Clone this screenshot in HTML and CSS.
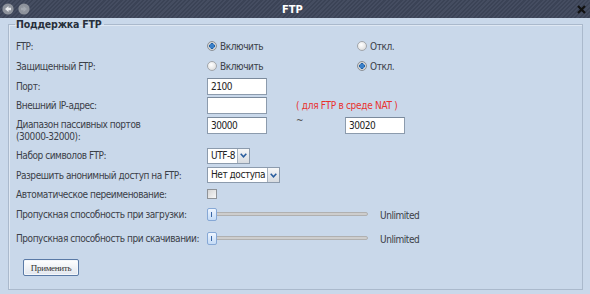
FILE: index.html
```html
<!DOCTYPE html>
<html lang="ru">
<head>
<meta charset="utf-8">
<title>FTP</title>
<link rel="stylesheet" href="styles.css">
</head>
<body>
<div class="window">
  <div class="titlebar">
    <div class="nav">
      <svg class="navbtn" width="12" height="12" viewBox="0 0 12 12"><circle cx="6" cy="6" r="5.6" fill="#8e939c"/><path d="M3 6 L6.5 3 L6.5 4.8 L9 4.8 L9 7.2 L6.5 7.2 L6.5 9 Z" fill="#e9ebee"/></svg>
      <svg class="navbtn" width="12" height="12" viewBox="0 0 12 12"><circle cx="6" cy="6" r="5.6" fill="#8e939c"/><path d="M9 6 L5.5 3 L5.5 4.8 L3 4.8 L3 7.2 L5.5 7.2 L5.5 9 Z" fill="#a3a8b0"/></svg>
    </div>
    <div class="title">FTP</div>
    <svg class="close" width="9" height="9" viewBox="0 0 9 9"><path d="M1 1 L8 8 M8 1 L1 8" stroke="#111" stroke-width="2.2"/></svg>
  </div>
  <div class="content">
    <fieldset class="group">
      <legend>Поддержка FTP</legend>
      <div class="row r20">
        <div class="label">FTP:</div>
        <div class="opt wide"><span class="radio on"></span>Включить</div>
        <div class="opt"><span class="radio"></span>Откл.</div>
      </div>
      <div class="row r20">
        <div class="label">Защищенный FTP:</div>
        <div class="opt wide"><span class="radio"></span>Включить</div>
        <div class="opt"><span class="radio on"></span>Откл.</div>
      </div>
      <div class="row r20">
        <div class="label">Порт:</div>
        <div class="cell"><span class="input">2100</span></div>
      </div>
      <div class="row r18">
        <div class="label">Внешний IP-адрес:</div>
        <div class="cell"><span class="input"></span></div>
        <div class="note">( для FTP в среде NAT )</div>
      </div>
      <div class="row rport">
        <div class="label two">Диапазон пассивных портов<br>(30000-32000):</div>
        <div class="cell"><span class="input">30000</span></div>
        <div class="tilde">~</div>
        <div class="cell"><span class="input">30020</span></div>
      </div>
      <div class="row r21">
        <div class="label">Набор символов FTP:</div>
        <div class="select"><span class="val">UTF-8</span><span class="arrow"><svg width="7" height="5" viewBox="0 0 7 5"><path d="M0.7 0.8 L3.5 3.8 L6.3 0.8" fill="none" stroke="#2a5d9e" stroke-width="1.6"/></svg></span></div>
      </div>
      <div class="row r18">
        <div class="label">Разрешить анонимный доступ на FTP:</div>
        <div class="select"><span class="val">Нет доступа</span><span class="arrow"><svg width="7" height="5" viewBox="0 0 7 5"><path d="M0.7 0.8 L3.5 3.8 L6.3 0.8" fill="none" stroke="#2a5d9e" stroke-width="1.6"/></svg></span></div>
      </div>
      <div class="row r20">
        <div class="label">Автоматическое переименование:</div>
        <span class="check"></span>
      </div>
      <div class="row r20">
        <div class="label">Пропускная способность при загрузки:</div>
        <div class="slider"><span class="thumb"></span></div>
        <div class="value">Unlimited</div>
      </div>
      <div class="row r20 gap4">
        <div class="label">Пропускная способность при скачивании:</div>
        <div class="slider"><span class="thumb"></span></div>
        <div class="value">Unlimited</div>
      </div>
      <div class="actions">
        <button class="apply" type="button">Применить</button>
      </div>
    </fieldset>
  </div>
</div>
</body>
</html>
```
FILE: styles.css
```css
html, body {
  margin: 0;
  padding: 0;
}
body {
  width: 590px;
  height: 294px;
  overflow: hidden;
  background: #c9d8ea;
  font-family: "DejaVu Sans Condensed", "DejaVu Sans", sans-serif;
  font-size: 10px;
  letter-spacing: -0.45px;
  color: #3b4048;
}
.titlebar {
  height: 18px;
  display: flex;
  align-items: center;
  position: relative;
  background: repeating-linear-gradient(135deg, #454d61 0 1.5px, #3b4356 1.5px 3px);
}
.nav {
  display: flex;
  gap: 4px;
  padding-left: 2px;
}
.navbtn {
  display: block;
}
.title {
  flex: 1;
  text-align: center;
  color: #fff;
  font-weight: bold;
  font-size: 11px;
  letter-spacing: 0;
  padding-right: 22px;
}
.close {
  margin-right: 4px;
  display: block;
}
.content {
  padding: 0 7px 0 8px;
}
.group {
  margin: 0;
  padding: 5px 0 13px 7px;
  border: 1px solid #aab9cc;
  box-shadow: inset 1px 1px 0 #dfe8f3;
  min-width: 0;
}
.group legend {
  padding: 0 2px 0 1px;
  margin-left: -1px;
  font-weight: bold;
  font-size: 10.5px;
  line-height: 13px;
  letter-spacing: -0.2px;
  color: #28303c;
}
.row {
  display: flex;
  align-items: center;
  white-space: nowrap;
}
.r20 { height: 20px; }
.r18 { height: 18px; }
.r21 { height: 21px; }
.gap4 { margin-top: 4px; }
.rport {
  height: 31px;
  align-items: flex-start;
}
.label {
  width: 191px;
  flex: none;
}
.label.two {
  line-height: 12px;
  margin-top: 5px;
}
.rport .cell {
  margin-top: 3px;
}
.opt {
  display: flex;
  align-items: center;
}
.opt.wide {
  width: 150px;
}
.radio {
  width: 10px;
  height: 10px;
  box-sizing: border-box;
  border-radius: 50%;
  border: 1px solid #a2a6ab;
  background: radial-gradient(circle at 40% 35%, #ffffff 0, #e6e6e6 60%, #cfcfcf 100%);
  margin-right: 3px;
  position: relative;
}
.radio.on {
  border-color: #8d9196;
  background: radial-gradient(circle, #3a7fc8 0 2.2px, #1d5b9e 2.6px, #dcdcdc 3px, #bdbdbd 100%);
}
.cell {
  width: 89px;
  flex: none;
}
.input {
  display: block;
  box-sizing: border-box;
  width: 60px;
  height: 17px;
  line-height: 15px;
  padding-left: 3px;
  background: #fff;
  border: 1px solid #8c9bad;
  border-top-color: #7b8a9c;
  color: #222;
}
.note {
  color: #e8322e;
  letter-spacing: -0.3px;
}
.tilde {
  width: 49px;
  flex: none;
  margin-top: 1px;
  color: #555;
}
.select {
  display: flex;
  height: 16px;
  box-sizing: border-box;
  border: 1px solid #8c9bad;
  background: #fff;
  color: #222;
}
.select .val {
  padding: 0 2px 0 3px;
  line-height: 14px;
  border-right: 1px solid #a7b2bf;
}
.select .arrow {
  width: 11px;
  display: flex;
  align-items: center;
  justify-content: center;
  background: linear-gradient(#f6f7f8, #d7dbe0);
}
.check {
  width: 10px;
  height: 10px;
  box-sizing: border-box;
  border: 1px solid #8f9398;
  background: linear-gradient(135deg, #d5d5d5, #f7f7f7);
}
.slider {
  width: 161px;
  height: 13px;
  position: relative;
  display: flex;
  align-items: center;
}
.slider::before {
  content: "";
  display: block;
  margin-left: 6px;
  width: 155px;
  height: 4px;
  box-sizing: border-box;
  border-radius: 2px;
  background: #cdcdcd;
  border: 1px solid #b0b0b0;
}
.thumb {
  position: absolute;
  left: 0;
  top: 0;
  width: 10px;
  height: 13px;
  box-sizing: border-box;
  border: 1px solid #86a8d6;
  border-radius: 2px;
  background: linear-gradient(#eef5ff, #c4dbf6);
}
.thumb::after {
  content: "";
  position: absolute;
  left: 3px;
  top: 3px;
  width: 1px;
  height: 5px;
  background: #3a66a5;
}
.value {
  margin-left: 12px;
  padding-top: 3px;
}
.actions {
  margin-top: 11px;
  padding-left: 7px;
}
.apply {
  display: block;
  width: 56px;
  height: 17px;
  padding: 0;
  border: 1px solid #5a7aa6;
  border-radius: 2px;
  background: linear-gradient(#ffffff, #e1e6ee);
  box-shadow: inset 0 0 0 1px #f4f7fb;
  font-family: "Liberation Serif", serif;
  font-size: 9px;
  letter-spacing: -0.3px;
  color: #333;
}
```
